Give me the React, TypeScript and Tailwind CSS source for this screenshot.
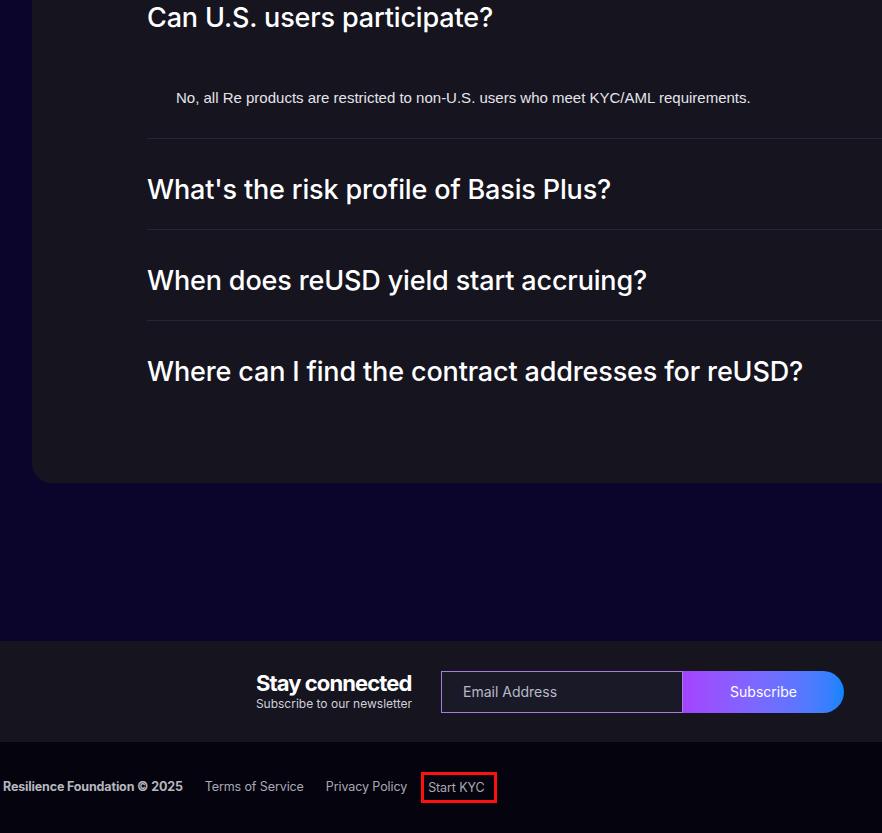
import React from "react";

const questions = [
  "What's the risk profile of Basis Plus?",
  "When does reUSD yield start accruing?",
  "Where can I find the contract addresses for reUSD?",
];

export default function App() {
  return (
    <div
      className="w-full overflow-hidden bg-[#0c052b]"
      style={{ fontFamily: "Inter, 'Noto Sans', sans-serif" }}
    >
      <div className="ml-[32px] mr-[-40px] rounded-b-[20px] bg-[#15141f] pl-[115px] pb-[72px]">
        <div className="border-b border-[#272635]">
          <h3 className="pt-[2px] text-[27px] leading-[32px] font-medium text-white tracking-[-0.15px]">
            Can U.S. users participate?
          </h3>
          <p
            className="pl-[29px] pt-[54px] pb-[30px] text-[15px] leading-[20px] text-[#e4e4ea]"
            style={{ fontFamily: "'Liberation Sans', Arial, sans-serif" }}
          >
            No, all Re products are restricted to non-U.S. users who meet KYC/AML requirements.
          </p>
        </div>
        {questions.map((q, i) => (
          <div
            key={q}
            className={
              i < questions.length - 1
                ? "border-b border-[#272635] pt-[35px] pb-[23px]"
                : "pt-[35px] pb-[23px]"
            }
          >
            <h3 className="text-[27px] leading-[32px] font-medium text-white tracking-[-0.15px]">
              {q}
            </h3>
          </div>
        ))}
      </div>

      <div className="h-[158px]" />

      <div className="flex h-[101px] items-center justify-end bg-[#15141f] pr-[38px]">
        <div className="mr-[29px] flex flex-col">
          <span className="text-[22px] leading-[25px] font-bold tracking-[-0.9px] text-white">
            Stay connected
          </span>
          <span className="text-[12px] leading-[16px] text-[#d0d0d8]">
            Subscribe to our newsletter
          </span>
        </div>
        <div className="flex h-[42px] w-[242px] items-center border border-[#a77be0] bg-[#1a1928] pl-[21px]">
          <span className="text-[14px] text-[#b9b9c6]">Email Address</span>
        </div>
        <button className="flex h-[42px] w-[161px] items-center justify-center rounded-r-full bg-gradient-to-r from-[#a443ff] to-[#0a84ff] text-[14px] text-white">
          Subscribe
        </button>
      </div>

      <div className="flex h-[91px] items-center bg-[#05040e] pl-[3px]">
        <span className="text-[12.5px] font-bold text-[#b7b7bf] tracking-[-0.15px]">
          Resilience Foundation © 2025
        </span>
        <span className="ml-[22px] text-[12.5px] tracking-[-0.1px] text-[#a9a9b3]">Terms of Service</span>
        <span className="ml-[22px] text-[12.5px] tracking-[-0.1px] text-[#a9a9b3]">Privacy Policy</span>
        <span className="ml-[14px] border-[3px] border-[#ff1010] pl-[4px] pr-[9px] py-[5px] text-[12.5px] leading-[15px] tracking-[-0.1px] text-[#a9a9b3]">
          Start KYC
        </span>
      </div>
    </div>
  );
}
